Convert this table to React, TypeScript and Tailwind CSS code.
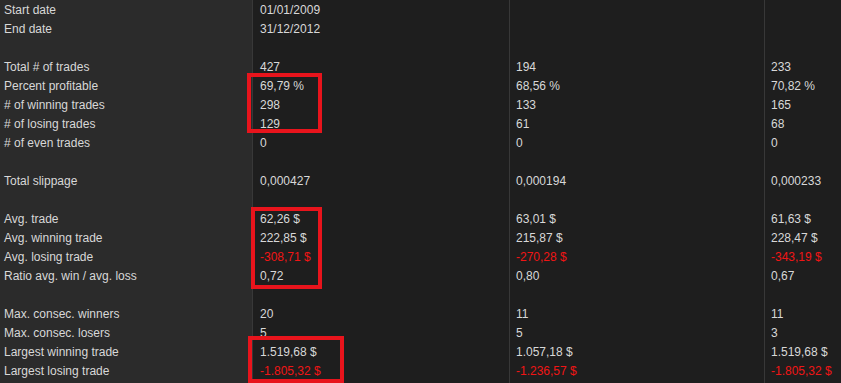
const rows: (string[] | null)[] = [
  ["Start date", "01/01/2009", "", ""],
  ["End date", "31/12/2012", "", ""],
  null,
  ["Total # of trades", "427", "194", "233"],
  ["Percent profitable", "69,79 %", "68,56 %", "70,82 %"],
  ["# of winning trades", "298", "133", "165"],
  ["# of losing trades", "129", "61", "68"],
  ["# of even trades", "0", "0", "0"],
  null,
  ["Total slippage", "0,000427", "0,000194", "0,000233"],
  null,
  ["Avg. trade", "62,26 $", "63,01 $", "61,63 $"],
  ["Avg. winning trade", "222,85 $", "215,87 $", "228,47 $"],
  ["Avg. losing trade", "-308,71 $", "-270,28 $", "-343,19 $"],
  ["Ratio avg. win / avg. loss", "0,72", "0,80", "0,67"],
  null,
  ["Max. consec. winners", "20", "11", "11"],
  ["Max. consec. losers", "5", "5", "3"],
  ["Largest winning trade", "1.519,68 $", "1.057,18 $", "1.519,68 $"],
  ["Largest losing trade", "-1.805,32 $", "-1.236,57 $", "-1.805,32 $"],
];

const Cell = ({ v }: { v: string }) => (
  <div
    className={`h-[19px] leading-[19px] whitespace-nowrap ${
      v.startsWith("-") ? "text-[#f01515]" : "text-[#d8d8d8]"
    }`}
  >
    {v}
  </div>
);

const Column = ({ idx, className }: { idx: number; className: string }) => (
  <div className={className}>
    {rows.map((r, i) => (
      <Cell key={i} v={r ? r[idx] : ""} />
    ))}
  </div>
);

export default function App() {
  return (
    <div
      className="relative w-[841px] h-[383px] overflow-hidden bg-[#1e1e1e] text-[12px]"
      style={{ fontFamily: '"Liberation Sans", Arial, sans-serif' }}
    >
      <div className="flex h-full">
        <Column idx={0} className="w-[252px] shrink-0 bg-[#2b2b2b] pl-[4px] pt-[1px]" />
        <Column
          idx={1}
          className="w-[257px] shrink-0 border-l border-[#383838] pl-[7px] pt-[1px]"
        />
        <Column
          idx={2}
          className="w-[255px] shrink-0 border-l border-[#383838] pl-[6px] pt-[1px]"
        />
        <Column idx={3} className="flex-1 border-l border-[#383838] pl-[6px] pt-[1px]" />
      </div>

      {/* highlight boxes */}
      <div className="absolute left-[247px] top-[73px] w-[75px] h-[60px] border-[4px] border-[#e8141c]" />
      <div className="absolute left-[251px] top-[207px] w-[71px] h-[82px] border-[4px] border-[#e8141c]" />
      <div className="absolute left-[248px] top-[336px] w-[96px] h-[47px] border-[4px] border-[#e8141c]" />
    </div>
  );
}
